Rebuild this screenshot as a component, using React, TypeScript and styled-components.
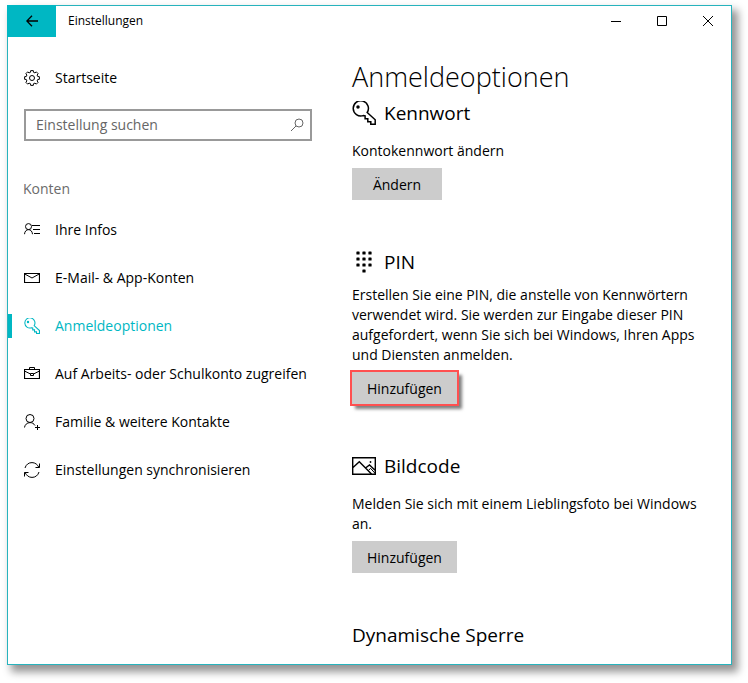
import React from "react";
import styled, { createGlobalStyle, css } from "styled-components";

const accent = "#00b7c3";
const black = "#000000";

const GlobalStyle = createGlobalStyle`
  *, *::before, *::after { box-sizing: border-box; }
  body {
    margin: 0;
    background: #ffffff;
    color: ${black};
    font-family: "Open Sans", "Noto Sans", sans-serif;
    font-size: 14px;
    line-height: 20px;
  }
  button, input { font: inherit; color: inherit; }
  h1, h2, p, ul { margin: 0; padding: 0; font-weight: 400; }
`;

const Desktop = styled.div`
  display: flex;
  min-height: 100vh;
  padding: 5px 16px 18px 7px;
`;

const Window = styled.div`
  flex: 1;
  min-width: 0;
  background: #ffffff;
  border: 1px solid #27b3bd;
  box-shadow: 5px 6px 8px 1px rgba(0, 0, 0, 0.42);
`;

const TitleBar = styled.header`
  display: flex;
  height: 31px;
`;

const BackButton = styled.button`
  display: grid;
  place-items: center;
  width: 49px;
  height: 32px;
  margin: -1px 0 0 -1px;
  padding: 0;
  border: 0;
  background: ${accent};
`;

const WindowTitle = styled.span`
  flex: 1;
  padding-left: 12px;
  font-size: 12px;
  line-height: 30px;
`;

const WindowButton = styled.button`
  display: grid;
  place-items: center;
  width: 46px;
  height: 30px;
  padding: 0;
  border: 0;
  background: transparent;
`;

const Body = styled.div`
  display: grid;
  grid-template-columns: 304px minmax(0, 1fr);
  column-gap: 40px;
`;

const Sidebar = styled.nav`
  padding-top: 17px;
`;

const NavList = styled.ul`
  list-style: none;
`;

const NavLink = styled.a<{ $active?: boolean }>`
  display: flex;
  align-items: center;
  gap: 15px;
  height: 48px;
  padding-left: 16px;
  color: ${black};
  text-decoration: none;
  white-space: nowrap;
  ${({ $active }) =>
    $active &&
    css`
      color: ${accent};
      background: linear-gradient(${accent}, ${accent}) left center / 4px 24px no-repeat;
    `}
  svg { flex: none; }
`;

const SearchBox = styled.label`
  display: flex;
  align-items: center;
  height: 32px;
  margin: 7px 0 0 16px;
  padding: 0 6px 0 10px;
  border: 2px solid #999999;
  color: #666666;
`;

const SearchInput = styled.input`
  flex: 1;
  min-width: 0;
  padding: 0;
  border: 0;
  outline: 0;
  background: transparent;
  &::placeholder { color: #666666; opacity: 1; }
`;

const GroupLabel = styled.h2`
  margin: 38px 0 7px 15px;
  color: #6b6b6b;
  font-size: 14px;
  line-height: 20px;
`;

const Content = styled.main`
  padding: 22px 16px 0 0;
`;

const PageTitle = styled.h1`
  font-size: 27px;
  font-weight: 300;
  line-height: 36px;
`;

const Section = styled.section`
  & + & { margin-top: 44px; }
`;

const SectionTitle = styled.h2<{ $tight?: boolean }>`
  display: flex;
  align-items: center;
  gap: 8px;
  margin-bottom: ${({ $tight }) => ($tight ? 5 : 10)}px;
  font-size: 19px;
  line-height: 36px;
`;

const ActionButton = styled.button<{ $marked?: boolean }>`
  display: block;
  min-width: 90px;
  height: 32px;
  margin-top: 7px;
  padding: 2px 15px 0;
  border: 0;
  background: #cccccc;
  ${({ $marked }) =>
    $marked &&
    css`
      outline: 2px solid #ff5050;
      box-shadow: 4px 4px 3px 1px rgba(0, 0, 0, 0.5);
    `}
`;

type IconProps = { size?: number; children: React.ReactNode };

const Icon = ({ size = 16, children }: IconProps) => (
  <svg
    width={size}
    height={size}
    viewBox={`0 0 ${size} ${size}`}
    fill="none"
    stroke="currentColor"
    strokeWidth="1"
    aria-hidden="true"
  >
    {children}
  </svg>
);

const gearPath = (() => {
  const points: string[] = [];
  for (let i = 0; i < 8; i++) {
    const steps: [number, number][] = [[-15, 5.9], [-10, 7.5], [10, 7.5], [15, 5.9]];
    for (const [offset, radius] of steps) {
      const angle = ((i * 45 + offset) * Math.PI) / 180;
      points.push(`${(8 + radius * Math.cos(angle)).toFixed(2)} ${(8 + radius * Math.sin(angle)).toFixed(2)}`);
    }
  }
  return `M${points.join("L")}Z`;
})();

const GearIcon = () => (
  <Icon>
    <path d={gearPath} strokeLinejoin="round" />
    <circle cx="8" cy="8" r="2.5" />
  </Icon>
);

const InfoIcon = () => (
  <Icon>
    <circle cx="4.5" cy="4.6" r="3" />
    <path d="M.5 12.2C.7 9.500 2.300 7.600 4.500 7.600s3.800 1.900 4 4.600M8 3.500h8M9 7.500h7M10 11.500h6" />
  </Icon>
);

const MailIcon = () => (
  <Icon>
    <path d="M.5 3.500h15v9H.5z" strokeWidth="1.200" />
    <path d="M.8 4 8 8l7.200-4" />
  </Icon>
);

const KeyIcon = ({ large }: { large?: boolean }) => (
  <svg
    width={large ? 24 : 16}
    height={large ? 24 : 16}
    viewBox="0 0 24 24"
    fill="none"
    stroke="currentColor"
    strokeWidth={large ? 1.5 : 1.6}
    aria-hidden="true"
  >
    <path d="M15.2 11.500 23.200 18.800v4.400h-4.400v-2.400h-3v-3h-2.700v-2.900l-1.900-.3A7.600 7.600 0 1 1 15.200 11.500Z" />
    <circle cx="6" cy="6" r="1" fill="currentColor" />
  </svg>
);

const BriefcaseIcon = () => (
  <Icon>
    <path d="M.5 3.500h15v9H.5z" strokeWidth="1.200" />
    <path d="M5.500 3.500v-2h5v2M.5 5 6.500 8M15.500 5 9.500 8M6.500 7.500h3v2h-3z" />
  </Icon>
);

const FamilyIcon = () => (
  <Icon>
    <circle cx="6" cy="4.500" r="4" />
    <path d="M.5 13.500C.7 11 3 8.600 6 8.600c2.200 0 3.800.9 5 2.900M13.500 11v5M11 13.500h5" />
  </Icon>
);

const SyncIcon = () => (
  <Icon>
    <path d="M1 6C2 2.500 4.700.6 8 .6c3.200 0 5.600 1.900 7 5M15.500 1.500V5.500H11.500M15 10c-1 3.500-3.700 5.400-7 5.400-3.200 0-5.600-1.900-7-5M.5 14.500V10.500H4.500" />
  </Icon>
);

const SearchIcon = () => (
  <Icon size={14}>
    <circle cx="9" cy="5" r="4" />
    <path d="M6 8 1 13" />
  </Icon>
);

const KeypadIcon = () => (
  <Icon size={24}>
    {[
      [4, 1], [10, 1], [16, 1],
      [4, 7], [10, 7], [16, 7],
      [4, 13], [10, 13], [16, 13],
      [10, 19],
    ].map(([x, y]) => (
      <rect key={`${x}-${y}`} x={x + 0.4} y={y + 0.4} width="3.2" height="3.2" rx=".6" fill="currentColor" stroke="none" />
    ))}
  </Icon>
);

const PictureIcon = () => (
  <Icon size={24}>
    <path strokeWidth="1.400" d="M.700 3.700h22.600v16.600H.700zM1 13.500l6.300-5.800L19.500 20M13.500 14l4-3 5.800 5.500" />
    <path d="M16.500 16.500l2-2.200 5 5.500" />
    <circle cx="18.500" cy="8" r=".9" fill="currentColor" stroke="none" />
  </Icon>
);

const navItems = [
  { label: "Ihre Infos", icon: <InfoIcon /> },
  { label: "E-Mail- & App-Konten", icon: <MailIcon /> },
  { label: "Anmeldeoptionen", icon: <KeyIcon />, active: true },
  { label: "Auf Arbeits- oder Schulkonto zugreifen", icon: <BriefcaseIcon /> },
  { label: "Familie & weitere Kontakte", icon: <FamilyIcon /> },
  { label: "Einstellungen synchronisieren", icon: <SyncIcon /> },
];

export default function App() {
  return (
    <>
      <GlobalStyle />
      <Desktop>
        <Window>
          <TitleBar>
            <BackButton aria-label="Zurück">
              <svg width="12" height="12" viewBox="0 0 12 12" fill="none" stroke="currentColor" strokeWidth="1.3" aria-hidden="true">
                <path d="M12 6H.8M6 .8.8 6 6 11.200" />
              </svg>
            </BackButton>
            <WindowTitle>Einstellungen</WindowTitle>
            <WindowButton aria-label="Minimieren">
              <Icon size={10}><path d="M0 5.500h10" /></Icon>
            </WindowButton>
            <WindowButton aria-label="Maximieren">
              <Icon size={10}><path d="M.5.5h9v9h-9z" /></Icon>
            </WindowButton>
            <WindowButton aria-label="Schließen">
              <Icon size={10}><path d="m0 0 10 10M10 0 0 10" /></Icon>
            </WindowButton>
          </TitleBar>
          <Body>
            <Sidebar>
              <NavLink href="#start"><GearIcon />Startseite</NavLink>
              <SearchBox>
                <SearchInput type="text" placeholder="Einstellung suchen" aria-label="Einstellung suchen" />
                <SearchIcon />
              </SearchBox>
              <GroupLabel>Konten</GroupLabel>
              <NavList>
                {navItems.map(({ label, icon, active }) => (
                  <li key={label}>
                    <NavLink href="#konten" $active={active} aria-current={active ? "page" : undefined}>
                      {icon}
                      {label}
                    </NavLink>
                  </li>
                ))}
              </NavList>
            </Sidebar>
            <Content>
              <PageTitle>Anmeldeoptionen</PageTitle>
              <Section>
                <SectionTitle><KeyIcon large />Kennwort</SectionTitle>
                <p>Kontokennwort ändern</p>
                <ActionButton>Ändern</ActionButton>
              </Section>
              <Section>
                <SectionTitle $tight><KeypadIcon />PIN</SectionTitle>
                <p>
                  Erstellen Sie eine PIN, die anstelle von Kennwörtern verwendet wird. Sie werden zur
                  Eingabe dieser PIN aufgefordert, wenn Sie sich bei Windows, Ihren Apps und Diensten
                  anmelden.
                </p>
                <ActionButton $marked>Hinzufügen</ActionButton>
              </Section>
              <Section>
                <SectionTitle><PictureIcon />Bildcode</SectionTitle>
                <p>Melden Sie sich mit einem Lieblingsfoto bei Windows an.</p>
                <ActionButton>Hinzufügen</ActionButton>
              </Section>
              <Section>
                <SectionTitle $tight>Dynamische Sperre</SectionTitle>
              </Section>
            </Content>
          </Body>
        </Window>
      </Desktop>
    </>
  );
}
